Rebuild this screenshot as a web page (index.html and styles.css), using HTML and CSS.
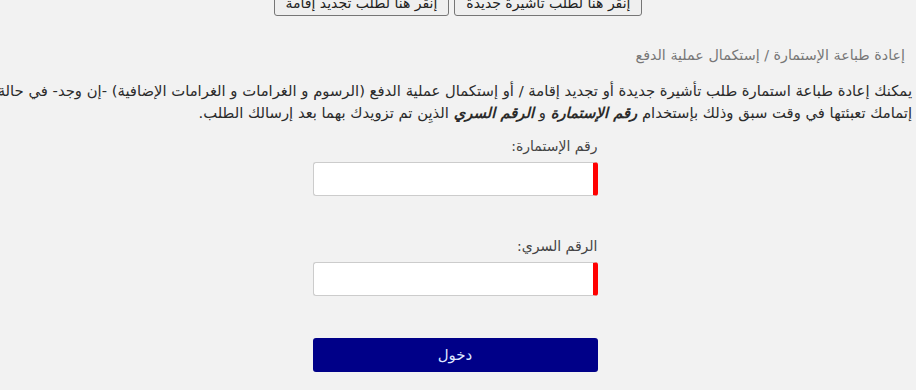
FILE: index.html
```html
<!DOCTYPE html>
<html lang="ar" dir="rtl">
<head>
<meta charset="utf-8">
<link rel="stylesheet" href="styles.css">
</head>
<body>
<div class="page">
  <div class="top-buttons">
    <button class="old-btn">إنقر هنا لطلب تأشيرة جديدة</button>
    <button class="old-btn">إنقر هنا لطلب تجديد إقامة</button>
  </div>
  <h1 class="title">إعادة طباعة الإستمارة / إستكمال عملية الدفع</h1>
  <p class="intro"><span class="line">يمكنك إعادة طباعة استمارة طلب تأشيرة جديدة أو تجديد إقامة / أو إستكمال عملية الدفع (الرسوم و الغرامات و الغرامات الإضافية) -إن وجد- في حالة</span><br><span class="line">إتمامك تعبئتها في وقت سبق وذلك بإستخدام <b><i>رقم الإستمارة</i></b> و <b><i>الرقم السري</i></b> الذيِن تم تزويدك بهما بعد إرسالك الطلب.</span></p>
  <form class="login">
    <div class="field">
      <label class="lbl">رقم الإستمارة:</label>
      <input class="inp" type="text">
    </div>
    <div class="field">
      <label class="lbl">الرقم السري:</label>
      <input class="inp" type="password">
    </div>
    <button type="button" class="submit">دخول</button>
  </form>
</div>
</body>
</html>
```
FILE: styles.css
```css
html, body {
  margin: 0;
  padding: 0;
  background: #f2f2f2;
  overflow: hidden;
}
body {
  font-family: "DejaVu Sans", sans-serif;
  color: #333;
}
.page {
  padding: 0 4px 0 4px;
}
.top-buttons {
  display: flex;
  justify-content: center;
  gap: 5px;
  margin-top: -11px;
}
.old-btn {
  font-family: "DejaVu Sans", sans-serif;
  font-size: 14px;
  height: 27px;
  padding: 0 11px;
  background: #efefef;
  border: 1px solid #767676;
  border-radius: 3px;
  color: #222;
}
.title {
  font-size: 14.3px;
  font-weight: normal;
  color: #777;
  margin: 29px 7px 0 0;
  line-height: 20px;
}
.intro {
  font-size: 14.8px;
  line-height: 22px;
  margin: 15px 0 0 0;
  color: #2b2b2b;
}
.line {
  white-space: nowrap;
}
.login {
  width: 285px;
  margin: 12px auto 0;
  position: relative;
  left: -3px;
  display: flex;
  flex-direction: column;
}
.field {
  display: flex;
  flex-direction: column;
  margin-bottom: 40px;
}
.lbl {
  font-size: 14px;
  color: #444;
  line-height: 20px;
  margin-bottom: 6px;
}
.inp {
  box-sizing: border-box;
  height: 34px;
  border: 1px solid #ccc;
  border-right: 5px solid #f00;
  border-radius: 3px;
  background: #fff;
}
.submit {
  margin-top: 2px;
  height: 34px;
  background: #000088;
  color: #dfe8ff;
  border: none;
  border-radius: 3px;
  font-family: "DejaVu Sans", sans-serif;
  font-size: 15px;
}
```
